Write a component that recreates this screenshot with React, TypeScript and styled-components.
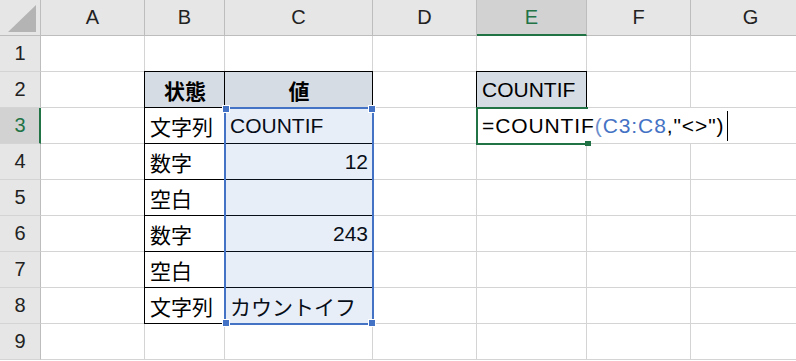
import React from 'react';
import styled, { createGlobalStyle } from 'styled-components';

const GlobalStyle = createGlobalStyle`
  html, body {
    margin: 0;
    padding: 0;
    background: #ffffff;
    overflow: hidden;
  }
`;

const GRID_LINE = '#d4d4d4';
const HEADER_LINE = '#bdbdbd';
const EXCEL_GREEN = '#217346';
const REF_BLUE = '#4472c4';

const Sheet = styled.div`
  display: grid;
  grid-template-columns: 41px 104px 80px 148px 104px 110px 104px 120px;
  grid-template-rows: repeat(10, 36px);
  width: 811px;
  font-family: 'Liberation Sans', 'Noto Sans CJK JP', sans-serif;
  color: #000;
`;

const Corner = styled.div`
  box-sizing: border-box;
  background: #e6e6e6;
  border-right: 1px solid ${HEADER_LINE};
  border-bottom: 1px solid ${HEADER_LINE};
  display: flex;
  align-items: flex-end;
  justify-content: flex-end;
  padding: 0 4px 3px 0;
`;

const ColHeader = styled.div<{ $selected?: boolean }>`
  box-sizing: border-box;
  background: ${(p) => (p.$selected ? '#d2d2d2' : '#e6e6e6')};
  border-right: 1px solid ${HEADER_LINE};
  border-bottom: ${(p) => (p.$selected ? `2px solid ${EXCEL_GREEN}` : `1px solid ${HEADER_LINE}`)};
  display: flex;
  align-items: center;
  justify-content: center;
  font-size: 20px;
  padding-top: ${(p) => (p.$selected ? '1px' : '0')};
  color: ${(p) => (p.$selected ? EXCEL_GREEN : '#222')};
`;

const RowHeader = styled.div<{ $selected?: boolean }>`
  box-sizing: border-box;
  background: ${(p) => (p.$selected ? '#d2d2d2' : '#e6e6e6')};
  border-right: ${(p) => (p.$selected ? `2px solid ${EXCEL_GREEN}` : `1px solid ${HEADER_LINE}`)};
  border-bottom: 1px solid ${GRID_LINE};
  display: flex;
  align-items: center;
  justify-content: center;
  padding-left: ${(p) => (p.$selected ? '1px' : '0')};
  font-size: 20px;
  color: ${(p) => (p.$selected ? EXCEL_GREEN : '#222')};
`;

const Cell = styled.div<{
  $boxed?: boolean;
  $fill?: string;
  $align?: 'left' | 'center' | 'right';
  $bold?: boolean;
  $span?: number;
}>`
  box-sizing: border-box;
  position: ${(p) => (p.$boxed || p.$span ? 'relative' : 'static')};
  grid-column: ${(p) => (p.$span ? `span ${p.$span}` : 'auto')};
  background: ${(p) => p.$fill || '#fff'};
  border-right: ${(p) => (p.$span ? 'none' : `1px solid ${GRID_LINE}`)};
  border-bottom: 1px solid ${GRID_LINE};
  display: flex;
  align-items: center;
  justify-content: ${(p) =>
    p.$align === 'right' ? 'flex-end' : p.$align === 'center' ? 'center' : 'flex-start'};
  padding: 0 4px 0 5px;
  font-size: 21px;
  font-weight: ${(p) => (p.$bold ? 700 : 400)};
  white-space: nowrap;

  &::after {
    content: '';
    display: ${(p) => (p.$boxed ? 'block' : 'none')};
    position: absolute;
    top: -1px;
    left: -1px;
    right: -1px;
    bottom: -1px;
    border: 1px solid #000;
    pointer-events: none;
  }
`;

const RangeBox = styled.div`
  position: absolute;
  top: -1px;
  left: -1px;
  width: 150px;
  height: 218px;
  box-sizing: border-box;
  border: 2px solid ${REF_BLUE};
  background: rgba(68, 114, 196, 0.12);
  z-index: 3;
  pointer-events: none;
`;

const Handle = styled.span<{ $top?: boolean; $left?: boolean }>`
  position: absolute;
  width: 6px;
  height: 6px;
  background: ${REF_BLUE};
  border: 1px solid #fff;
  ${(p) => (p.$top ? 'top: -4px;' : 'bottom: -4px;')}
  ${(p) => (p.$left ? 'left: -4px;' : 'right: -4px;')}
`;

const ActiveBox = styled.div`
  position: absolute;
  top: -1px;
  left: -1px;
  width: 112px;
  height: 38px;
  box-sizing: border-box;
  border: 2px solid ${EXCEL_GREEN};
  border-right: none;
  z-index: 3;
  pointer-events: none;
`;

const FillHandle = styled.span`
  position: absolute;
  right: -3px;
  bottom: -3px;
  width: 6px;
  height: 5px;
  background: ${EXCEL_GREEN};
`;

const Formula = styled.span`
  letter-spacing: 0.9px;
`;

const Ref = styled.span<{ $soft?: boolean }>`
  color: ${(p) => (p.$soft ? '#6d8fcc' : REF_BLUE)};
`;

const Caret = styled.span`
  display: inline-block;
  width: 1px;
  height: 30px;
  margin-left: 3px;
  background: #000;
`;

const COLS = ['A', 'B', 'C', 'D', 'E', 'F', 'G'];

type CellData = { text?: string; align?: 'left' | 'center' | 'right'; bold?: boolean; fill?: string; boxed?: boolean };

const HEAD_FILL = '#d6dce4';

const data: Record<number, Record<string, CellData>> = {
  2: {
    B: { text: '状態', align: 'center', bold: true, fill: HEAD_FILL, boxed: true },
    C: { text: '値', align: 'center', bold: true, fill: HEAD_FILL, boxed: true },
    E: { text: 'COUNTIF', fill: HEAD_FILL, boxed: true },
  },
  3: { B: { text: '文字列', boxed: true }, C: { text: 'COUNTIF', boxed: true } },
  4: { B: { text: '数字', boxed: true }, C: { text: '12', align: 'right', boxed: true } },
  5: { B: { text: '空白', boxed: true }, C: { boxed: true } },
  6: { B: { text: '数字', boxed: true }, C: { text: '243', align: 'right', boxed: true } },
  7: { B: { text: '空白', boxed: true }, C: { boxed: true } },
  8: { B: { text: '文字列', boxed: true }, C: { text: 'カウントイフ', boxed: true } },
};

function CornerTriangle() {
  return (
    <svg width="28" height="27" viewBox="0 0 28 27">
      <polygon points="28,0 28,27 0,27" fill="#b4b4b4" />
    </svg>
  );
}

export default function App() {
  const rows = [1, 2, 3, 4, 5, 6, 7, 8, 9];

  return (
    <>
      <GlobalStyle />
      <Sheet>
        <Corner>
          <CornerTriangle />
        </Corner>
        {COLS.map((c) => (
          <ColHeader key={c} $selected={c === 'E'}>
            {c}
          </ColHeader>
        ))}

        {rows.map((r) => (
          <React.Fragment key={r}>
            <RowHeader $selected={r === 3}>{r}</RowHeader>
            {COLS.map((c) => {
              if (r === 3 && c === 'E') {
                return (
                  <Cell key={c} $span={3}>
                    <Formula>
                      =COUNTIF<Ref $soft>(</Ref>
                      <Ref>C3:C8</Ref>,"&lt;&gt;")
                    </Formula>
                    <Caret />
                    <ActiveBox>
                      <FillHandle />
                    </ActiveBox>
                  </Cell>
                );
              }
              if (r === 3 && (c === 'F' || c === 'G')) return null;
              const d = data[r]?.[c] || {};
              return (
                <Cell key={c} $boxed={d.boxed} $fill={d.fill} $align={d.align} $bold={d.bold}>
                  {d.text}
                  {r === 3 && c === 'C' && (
                    <RangeBox>
                      <Handle $top $left />
                      <Handle $top />
                      <Handle $left />
                      <Handle />
                    </RangeBox>
                  )}
                </Cell>
              );
            })}
          </React.Fragment>
        ))}
      </Sheet>
    </>
  );
}
